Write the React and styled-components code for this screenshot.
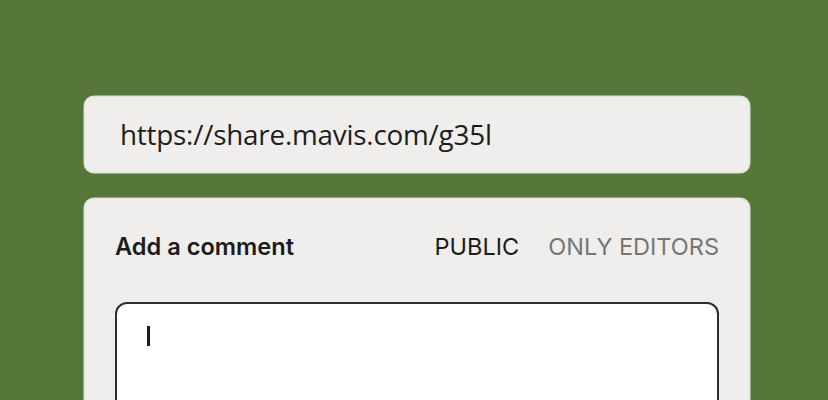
import React from "react";
import styled, { createGlobalStyle } from "styled-components";

const Global = createGlobalStyle`
  html, body { margin: 0; padding: 0; background: #56763a; }
  body { font-family: "Inter", "Liberation Sans", sans-serif; }
`;

const Page = styled.div`
  width: 828px;
  height: 400px;
  overflow: hidden;
  background: #56763a;
  box-sizing: border-box;
  padding: 97px 79px 0 85px;
  display: flex;
  flex-direction: column;
  gap: 27px;
`;

const Panel = styled.div`
  background: #efeeec;
  border-radius: 9px;
  box-shadow: 0 0 0 1.5px #dfe6d6;
  box-sizing: border-box;
  flex-shrink: 0;
`;

const UrlBar = styled(Panel)`
  height: 75px;
  display: flex;
  align-items: center;
  padding: 0 35px 2px;
  font-family: "Open Sans", "Noto Sans", sans-serif;
  font-size: 27.8px;
  color: #1d1d1d;
  letter-spacing: -0.2px;
`;

const Card = styled(Panel)`
  height: 240px;
  padding: 30px 30px 0 30px;
  display: flex;
  flex-direction: column;
  gap: 39px;
`;

const Header = styled.div`
  display: flex;
  align-items: center;
  height: 34px;
  flex-shrink: 0;
`;

const Title = styled.div`
  font-weight: 600;
  font-size: 23.6px;
  color: #1b1b1b;
  flex: 1;
`;

const Tab = styled.div`
  font-size: 23.5px;
  color: ${p => (p.$active ? "#1b1b1b" : "#767676")};
  margin-left: ${p => (p.$first ? "0" : "29px")};
`;

const TextArea = styled.div`
  background: #ffffff;
  border: 2px solid #2e2e2e;
  border-radius: 12px;
  height: 160px;
  padding: 22px 30px;
  box-sizing: border-box;
  flex-shrink: 0;
`;

const Caret = styled.div`
  width: 2.5px;
  height: 20px;
  background: #1b1b1b;
`;

export default function App() {
  return (
    <>
      <Global />
      <Page>
        <UrlBar>https://share.mavis.com/g35l</UrlBar>
        <Card>
          <Header>
            <Title>Add a comment</Title>
            <Tab $active $first>PUBLIC</Tab>
            <Tab>ONLY EDITORS</Tab>
          </Header>
          <TextArea>
            <Caret />
          </TextArea>
        </Card>
      </Page>
    </>
  );
}
